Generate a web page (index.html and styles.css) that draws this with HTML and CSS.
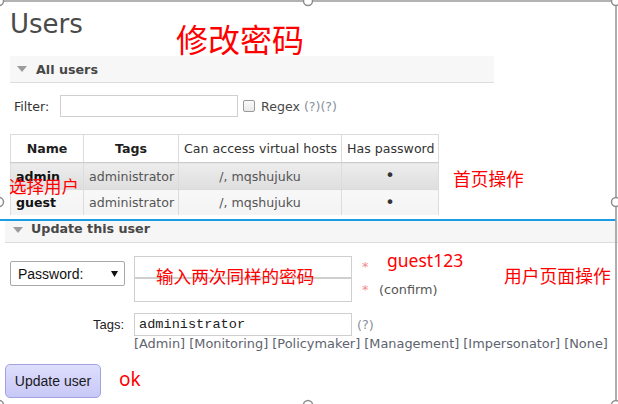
FILE: index.html
```html
<!DOCTYPE html>
<html lang="zh-CN">
<head>
<meta charset="utf-8">
<title>Users</title>
<link rel="stylesheet" href="styles.css">
</head>
<body>
<div class="page">
  <section class="shot-top">
    <h1 class="title">Users</h1>
    <div class="section-head head-all"><span class="tri"></span><span>All users</span></div>
    <div class="filter-row">
      <span class="filter-label">Filter:</span>
      <input class="text-input filter-input" type="text">
      <span class="checkbox"></span>
      <span class="regex">Regex <span class="help">(?)(?)</span></span>
    </div>
    <table class="users">
      <colgroup><col class="c-name"><col class="c-tags"><col class="c-vhosts"><col class="c-pw"></colgroup>
      <thead>
        <tr><th class="th-bold">Name</th><th class="th-bold">Tags</th><th>Can access virtual hosts</th><th>Has password</th></tr>
      </thead>
      <tbody>
        <tr class="row-hover"><td class="name">admin</td><td>administrator</td><td>/, mqshujuku</td><td class="dot">•</td></tr>
        <tr class="row-alt"><td class="name">guest</td><td>administrator</td><td>/, mqshujuku</td><td class="dot">•</td></tr>
      </tbody>
    </table>
  </section>
  <div class="divider"></div>
  <section class="shot-bottom">
    <div class="section-head head-update"><span class="tri tri-update"></span><span>Update this user</span></div>
    <div class="form">
      <div class="row-pw">
        <div class="select"><span>Password:</span><svg class="arrow" width="7" height="6" viewBox="0 0 7 6"><polygon points="0,0 7,0 3.5,6" fill="#111"/></svg></div>
        <div class="pw-inputs">
          <input class="text-input pw1" type="password">
          <input class="text-input pw2" type="password">
        </div>
        <div class="pw-notes">
          <div class="pw-note n1"><span class="star">*</span></div>
          <div class="pw-note n2"><span class="star">*</span><span class="confirm">(confirm)</span></div>
        </div>
      </div>
      <div class="row-tags">
        <span class="tags-label">Tags:</span>
        <input class="text-input tags-input" type="text" value="administrator">
        <span class="help help-tags">(?)</span>
      </div>
      <div class="tag-links">[Admin] [Monitoring] [Policymaker] [Management] [Impersonator] [None]</div>
      <button class="update-btn" type="button">Update user</button>
    </div>
  </section>

  <div class="note n-title">修改密码</div>
  <div class="note n-select">选择用户</div>
  <div class="note n-home">首页操作</div>
  <div class="note n-twice">输入两次同样的密码</div>
  <div class="note n-userpage">用户页面操作</div>
  <div class="note latin n-guest">guest123</div>
  <div class="note latin n-ok">ok</div>

  <svg class="frame" width="618" height="404" viewBox="0 0 618 404">
    <line x1="0" y1="1" x2="616" y2="1" stroke="#9a9a9a" stroke-width="1.6"/>
    <line x1="616" y1="0" x2="616" y2="404" stroke="#9a9a9a" stroke-width="1.6"/>
    <g fill="#fff" stroke="#8e8e8e" stroke-width="1.5">
      <circle cx="-1" cy="1" r="4.5"/>
      <circle cx="308" cy="1" r="4.5"/>
      <circle cx="616" cy="1" r="4.5"/>
      <circle cx="-1" cy="202" r="4.5"/>
      <circle cx="616" cy="202" r="4.5"/>
      <circle cx="-1" cy="405" r="4.5"/>
      <circle cx="308" cy="405" r="4.5"/>
      <circle cx="616" cy="405" r="4.5"/>
    </g>
  </svg>
</div>
</body>
</html>
```

FILE: styles.css
```css
* { box-sizing: border-box; }
html, body { margin: 0; padding: 0; background: #fff; }
body {
  width: 618px;
  height: 404px;
  overflow: hidden;
  font-family: "DejaVu Sans", Verdana, sans-serif;
  font-size: 12.6px;
  color: #484848;
}
.page { position: relative; width: 618px; height: 404px; overflow: hidden; }

/* ---------- top screenshot ---------- */
.shot-top { padding-left: 10px; height: 215px; overflow: hidden; }
.title {
  margin: 9px 0 0 0;
  font-size: 26px;
  line-height: 30px;
  font-weight: normal;
  color: #4a4a4a;
}
.section-head {
  display: flex;
  align-items: center;
  background: #f7f7f7;
  border-bottom: 1px solid #dcdcdc;
  font-weight: bold;
  color: #474747;
  font-size: 12.7px;
}
.head-all { margin-top: 17px; width: 484px; height: 27px; padding-left: 7px; }
.tri {
  width: 0; height: 0;
  border-left: 5px solid transparent;
  border-right: 5px solid transparent;
  border-top: 6px solid #9c9c9c;
  margin-right: 9px;
}
.filter-row { margin-top: 12px; height: 22px; display: flex; align-items: center; }
.filter-label { width: 50px; padding-left: 4px; color: #333; }
.text-input {
  margin: 0;
  padding: 0 4px;
  border: 1px solid #cfcfcf;
  background: #fff;
  outline: none;
  border-radius: 0;
}
.filter-input { width: 178px; height: 22px; }
.checkbox {
  width: 12px; height: 12px;
  margin-left: 5px;
  border: 1px solid #9a9a9a;
  border-radius: 2px;
  background: linear-gradient(#fbfbfb, #e9e9e9);
}
.regex { margin-left: 6px; color: #484848; }
.help { color: #8a909c; }

.users {
  margin-top: 17px;
  border-collapse: collapse;
  table-layout: fixed;
  width: 428px;
  font-size: 12.6px;
}
.c-name { width: 73px; }
.c-tags { width: 95px; }
.c-vhosts { width: 163px; }
.c-pw { width: 97px; }
.users th, .users td {
  border: 1px solid #dcdcdc;
  padding: 0 5px;
  text-align: center;
  white-space: nowrap;
  overflow: hidden;
}
.users th { height: 28px; background: #fff; font-weight: normal; color: #333; border-bottom-color: #cccccc; }
.users th.th-bold { font-weight: bold; color: #1e1e1e; }
.users td { height: 27px; color: #555; }
.users td.name { text-align: left; font-weight: bold; color: #111; }
.users td.dot { color: #333; font-size: 16px; line-height: 1; }
.row-hover td { background: linear-gradient(#ededed, #dedede); }
.row-alt td { background: linear-gradient(#f8f8f8, #f3f3f3); height: 26px; border-bottom: none; }

.divider { margin-top: 4px; height: 2px; width: 616px; background: #1a9de4; }

/* ---------- bottom screenshot ---------- */
.head-update {
  margin-left: 5px;
  height: 22px;
  padding-left: 8px;
  align-items: flex-start;
  line-height: 16px;
  background: #f6f6f6;
}
.tri-update {
  margin-top: 6px;
  border-left-width: 5.5px;
  border-right-width: 5.5px;
  margin-right: 8px;
}
.form { padding-left: 10px; margin-top: 13px; }
.row-pw { display: flex; align-items: flex-start; }
.select {
  width: 115px;
  height: 25px;
  margin-top: 5px;
  border: 1px solid #a8a8a8;
  border-radius: 2px;
  display: flex;
  align-items: center;
  justify-content: space-between;
  padding: 0 6px 0 7px;
  font-family: "Liberation Sans", Arial, sans-serif;
  font-size: 14px;
  color: #111;
}
.arrow { display: block; }
.pw-inputs { margin-left: 9px; width: 218px; display: flex; flex-direction: column; }
.pw1 { width: 218px; height: 22px; }
.pw2 { width: 218px; height: 24px; }
.pw-notes { margin-left: 10px; display: flex; flex-direction: column; font-size: 12.8px; }
.n1 { height: 22px; line-height: 22px; }
.n2 { height: 24px; line-height: 24px; }
.star { display: inline-block; width: 17px; color: #f58a8a; }
.confirm { color: #555; }

.row-tags { margin-top: 11px; display: flex; align-items: center; height: 23px; }
.tags-label {
  width: 115px;
  text-align: right;
  padding-right: 1px;
  font-family: "Liberation Sans", Arial, sans-serif;
  font-size: 13px;
  color: #222;
}
.tags-input {
  margin-left: 9px;
  width: 218px;
  height: 23px;
  font-family: "Liberation Mono", "Courier New", monospace;
  font-size: 13.6px;
  color: #222;
}
.help-tags { margin-left: 5px; font-size: 12.8px; }
.tag-links {
  margin-top: 1px;
  padding-left: 124px;
  line-height: 14px;
  font-size: 12.9px;
  color: #5e636e;
  white-space: nowrap;
}
.update-btn {
  display: block;
  margin: 13px 0 0 -5px;
  width: 96px;
  height: 34px;
  padding: 0;
  border: 1px solid #a2a2e2;
  border-radius: 5px;
  background: linear-gradient(#dedefd, #c8c8f7);
  font-family: "Liberation Sans", Arial, sans-serif;
  font-size: 14px;
  color: #1a1a1a;
}

/* ---------- red annotations (overlay) ---------- */
.note {
  position: absolute;
  color: #ff0000;
  font-family: "Noto Sans CJK SC", "Noto Sans", sans-serif;
  line-height: 1;
  white-space: nowrap;
}
.latin { font-family: "Noto Sans", "Noto Sans CJK SC", sans-serif; }
.n-title { left: 176px; top: 22px; font-size: 32px; }
.n-select { left: 9px; top: 177px; font-size: 17.5px; }
.n-home { left: 453px; top: 170px; font-size: 17.7px; }
.n-twice { left: 156px; top: 266.5px; font-size: 17.6px; }
.n-userpage { left: 504px; top: 266.5px; font-size: 17.8px; }
.n-guest { left: 387px; top: 252px; font-size: 17.5px; }
.n-ok { left: 119px; top: 370px; font-size: 19px; }

/* ---------- selection frame (overlay) ---------- */
.frame { position: absolute; left: 0; top: 0; overflow: visible; pointer-events: none; }
```
